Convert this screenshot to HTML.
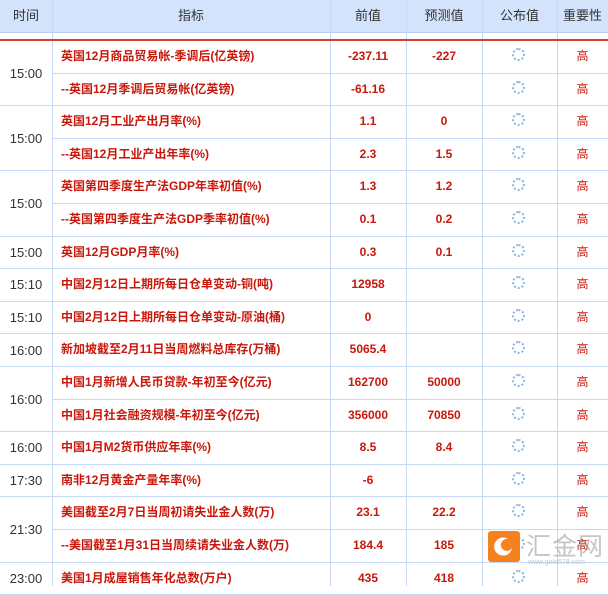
<!DOCTYPE html><html><head><meta charset="utf-8"><style>
body{margin:0;width:608px;height:586px;overflow:hidden;background:#fff;font-family:"Liberation Sans","Noto Sans CJK SC",sans-serif;position:relative}
.hd{position:absolute;left:0;top:0;width:608px;height:32px;background:#d3e3fc;border-bottom:1px solid #b9d0f2}
.hd div{position:absolute;top:0;height:32px;line-height:32px;text-align:center;font-size:13px;color:#333}
.red{position:absolute;left:0;top:39px;width:608px;height:2px;background:#d0412e}
.v{position:absolute;top:0;width:1px;height:586px;background:#c5d8f5}
.r{position:absolute;left:52px;width:556px;height:32.6px;border-bottom:1px solid #c5d8f5;box-sizing:border-box}
.r div{position:absolute;top:0;line-height:31px;font-size:12px;font-weight:bold;color:#c8180b;white-space:nowrap}
.n{left:9px}
.p{left:278px;width:76px;text-align:center}
.f{left:354px;width:76px;text-align:center}
.g{left:505px;width:51px;text-align:center;font-weight:normal!important}
.s{left:460px;top:7px!important;width:9px;height:9px;border:2px dotted #8fb6e2;border-radius:50%}
.t{position:absolute;left:0;width:52px;border-bottom:1px solid #c5d8f5;box-sizing:border-box;font-size:13px;color:#333;text-align:center;display:flex;align-items:center;justify-content:center}
</style></head><body>
<div class="hd">
<div style="left:0;width:52px">时间</div><div style="left:52px;width:278px">指标</div><div style="left:330px;width:76px">前值</div><div style="left:406px;width:76px">预测值</div><div style="left:482px;width:75px">公布值</div><div style="left:557px;width:51px">重要性</div>
</div>
<div class="v" style="left:52px"></div><div class="v" style="left:330px"></div><div class="v" style="left:406px"></div><div class="v" style="left:482px"></div><div class="v" style="left:557px"></div>
<div class="red"></div>

<div class="t" style="top:41px;height:65.2px">15:00</div>
<div class="t" style="top:106.2px;height:65.2px">15:00</div>
<div class="t" style="top:171.4px;height:65.2px">15:00</div>
<div class="t" style="top:236.6px;height:32.6px">15:00</div>
<div class="t" style="top:269.2px;height:32.6px">15:10</div>
<div class="t" style="top:301.8px;height:32.6px">15:10</div>
<div class="t" style="top:334.4px;height:32.6px">16:00</div>
<div class="t" style="top:367px;height:65.2px">16:00</div>
<div class="t" style="top:432.2px;height:32.6px">16:00</div>
<div class="t" style="top:464.8px;height:32.6px">17:30</div>
<div class="t" style="top:497.4px;height:65.2px">21:30</div>
<div class="t" style="top:562.6px;height:32.6px">23:00</div>

<div class="r" style="top:41px"><div class="n">英国12月商品贸易帐-季调后(亿英镑)</div><div class="p">-237.11</div><div class="f">-227</div><div class="s"></div><div class="g">高</div></div>
<div class="r" style="top:73.6px"><div class="n">--英国12月季调后贸易帐(亿英镑)</div><div class="p">-61.16</div><div class="s"></div><div class="g">高</div></div>
<div class="r" style="top:106.2px"><div class="n">英国12月工业产出月率(%)</div><div class="p">1.1</div><div class="f">0</div><div class="s"></div><div class="g">高</div></div>
<div class="r" style="top:138.8px"><div class="n">--英国12月工业产出年率(%)</div><div class="p">2.3</div><div class="f">1.5</div><div class="s"></div><div class="g">高</div></div>
<div class="r" style="top:171.4px"><div class="n">英国第四季度生产法GDP年率初值(%)</div><div class="p">1.3</div><div class="f">1.2</div><div class="s"></div><div class="g">高</div></div>
<div class="r" style="top:204px"><div class="n">--英国第四季度生产法GDP季率初值(%)</div><div class="p">0.1</div><div class="f">0.2</div><div class="s"></div><div class="g">高</div></div>
<div class="r" style="top:236.6px"><div class="n">英国12月GDP月率(%)</div><div class="p">0.3</div><div class="f">0.1</div><div class="s"></div><div class="g">高</div></div>
<div class="r" style="top:269.2px"><div class="n">中国2月12日上期所每日仓单变动-铜(吨)</div><div class="p">12958</div><div class="s"></div><div class="g">高</div></div>
<div class="r" style="top:301.8px"><div class="n">中国2月12日上期所每日仓单变动-原油(桶)</div><div class="p">0</div><div class="s"></div><div class="g">高</div></div>
<div class="r" style="top:334.4px"><div class="n">新加坡截至2月11日当周燃料总库存(万桶)</div><div class="p">5065.4</div><div class="s"></div><div class="g">高</div></div>
<div class="r" style="top:367px"><div class="n">中国1月新增人民币贷款-年初至今(亿元)</div><div class="p">162700</div><div class="f">50000</div><div class="s"></div><div class="g">高</div></div>
<div class="r" style="top:399.6px"><div class="n">中国1月社会融资规模-年初至今(亿元)</div><div class="p">356000</div><div class="f">70850</div><div class="s"></div><div class="g">高</div></div>
<div class="r" style="top:432.2px"><div class="n">中国1月M2货币供应年率(%)</div><div class="p">8.5</div><div class="f">8.4</div><div class="s"></div><div class="g">高</div></div>
<div class="r" style="top:464.8px"><div class="n">南非12月黄金产量年率(%)</div><div class="p">-6</div><div class="s"></div><div class="g">高</div></div>
<div class="r" style="top:497.4px"><div class="n">美国截至2月7日当周初请失业金人数(万)</div><div class="p">23.1</div><div class="f">22.2</div><div class="s"></div><div class="g">高</div></div>
<div class="r" style="top:530px"><div class="n">--美国截至1月31日当周续请失业金人数(万)</div><div class="p">184.4</div><div class="f">185</div><div class="s"></div><div class="g">高</div></div>
<div class="r" style="top:562.6px"><div class="n">美国1月成屋销售年化总数(万户)</div><div class="p">435</div><div class="f">418</div><div class="s"></div><div class="g">高</div></div>

<div style="position:absolute;left:488px;top:531px;width:32px;height:31px;background:#f5821f;border-radius:3px"><svg width="32" height="31" viewBox="0 0 32 31"><path d="M20 8 A9 9 0 1 0 24 17 A6 6 0 1 1 20 8Z" fill="#fff"/></svg></div>
<div style="position:absolute;left:526px;top:527px;font-size:25px;color:rgba(150,150,150,0.55);letter-spacing:1px">汇金网</div>
<div style="position:absolute;left:528px;top:559px;font-size:7px;color:rgba(150,150,150,0.5)">www.gold678.com</div>
</body></html>
